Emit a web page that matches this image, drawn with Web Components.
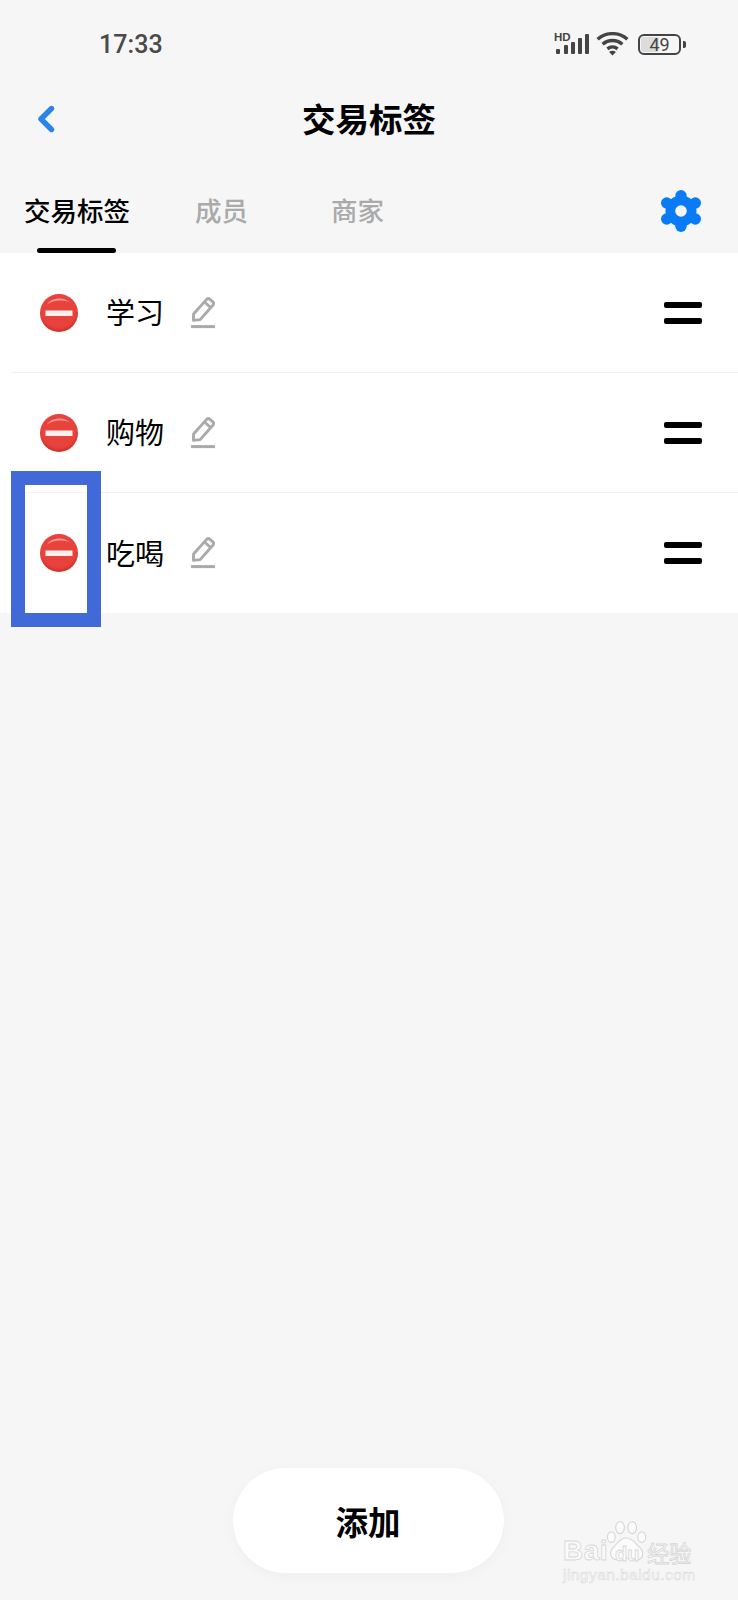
<!DOCTYPE html>
<html lang="zh">
<head>
<meta charset="utf-8">
<title>交易标签</title>
<style>
  html, body { margin: 0; padding: 0; }
  body {
    width: 738px;
    height: 1600px;
    overflow: hidden;
    background: #f6f6f6;
    font-family: Roboto, "Noto Sans CJK SC", sans-serif;
  }
</style>
</head>
<body>
<tag-screen>
  <status-bar slot="top" time="17:33" battery="49"></status-bar>
  <nav-header slot="top" title="交易标签"></nav-header>
  <tab-strip slot="top" data-tabs='["交易标签","成员","商家"]'></tab-strip>
  <tag-row name="学习"></tag-row>
  <tag-row name="购物"></tag-row>
  <tag-row name="吃喝" last></tag-row>
  <add-button slot="bottom">添加</add-button>
</tag-screen>
<mark-box></mark-box>
<baidu-mark></baidu-mark>

<script>
const CJK = '"Noto Sans CJK SC", sans-serif';

class TagScreen extends HTMLElement {
  constructor() {
    super();
    this.attachShadow({ mode: 'open' });
  }

  connectedCallback() {
    this.shadowRoot.innerHTML = `
      <style>
        :host { display: flex; flex-direction: column; height: 1600px; }
        .list { display: block; background: #fff; }
        .rest { flex: 1; }
        .bottom { display: flex; justify-content: center; padding: 0 2px 27px 0; }
      </style>
      <slot name="top"></slot>
      <div class="list"><slot></slot></div>
      <div class="rest"></div>
      <div class="bottom"><slot name="bottom"></slot></div>
    `;
  }
}

class StatusBar extends HTMLElement {
  constructor() {
    super();
    this.attachShadow({ mode: 'open' });
  }

  connectedCallback() {
    const time = this.getAttribute('time');
    const battery = this.getAttribute('battery');
    this.shadowRoot.innerHTML = `
      <style>
        :host { display: flex; align-items: center; height: 88px; padding: 0 52px 0 99px; color: #444; }
        .time { padding-top: 2px; font: 500 25px/30px Roboto, sans-serif; letter-spacing: 0.1px; color: #4a4a4a; }
        .icons { margin-left: auto; display: flex; align-items: center; }
        svg { display: block; }
        .wifi { margin-left: 6px; }
        .battery { margin-left: 9px; }
        .hd { font: 700 11.5px "Liberation Sans", sans-serif; fill: #444; }
        .cell {
          position: relative; box-sizing: border-box; width: 43px; height: 21px;
          border: 2px solid #444; border-radius: 6px; overflow: hidden;
          font: 400 18px/17px Roboto, sans-serif; text-align: center;
        }
        .cell span { position: relative; }
        .fill { position: absolute; left: 1px; top: 1px; bottom: 1px; width: 18px; background: #dcdcdc; border-radius: 2px; }
        .nub { width: 3px; height: 7px; margin-left: 2px; background: #444; border-radius: 0 2px 2px 0; }
      </style>
      <div class="time">${time}</div>
      <div class="icons">
        <svg width="36" height="24" viewBox="0 0 36 24">
          <text class="hd" x="0" y="9">HD</text>
          <rect x="2" y="17" width="4" height="5" rx="1" fill="#444"/>
          <rect x="10" y="13" width="4" height="9" rx="1" fill="#444"/>
          <rect x="17" y="10" width="4" height="12" rx="1" fill="#444"/>
          <rect x="24" y="6" width="4" height="16" rx="1" fill="#444"/>
          <rect x="31" y="2" width="4" height="20" rx="1" fill="#444"/>
        </svg>
        <svg class="wifi" width="33" height="24" viewBox="0 0 33 24" fill="none" stroke="#444" stroke-width="3.4">
          <path d="M1.6 7.2C10 -0.2 23 -0.2 31.4 7.2"/>
          <path d="M6.6 12.2C12.4 7.2 20.6 7.2 26.4 12.2"/>
          <path d="M11.4 16.8C14.4 14.4 18.6 14.4 21.6 16.8"/>
          <path d="M16.5 23.5l-3.4-3.4a4.8 4.8 0 0 1 6.8 0z" fill="#444" stroke="none"/>
        </svg>
        <div class="battery cell"><div class="fill"></div><span>${battery}</span></div>
        <div class="nub"></div>
      </div>
    `;
  }
}

class NavHeader extends HTMLElement {
  constructor() {
    super();
    this.attachShadow({ mode: 'open' });
  }

  connectedCallback() {
    this.shadowRoot.innerHTML = `
      <style>
        :host { display: grid; grid-template-columns: 1fr auto 1fr; align-items: center; height: 64px; }
        svg { display: block; margin: 0 0 2px 36px; }
        .title { margin-bottom: 4px; font: 700 33.5px/44px ${CJK}; color: #000; }
      </style>
      <svg width="20" height="28" viewBox="0 0 20 28" fill="none">
        <path d="M15.5 3.5L5 14l10.5 10.5" stroke="#2a85ea" stroke-width="5.4" stroke-linecap="round" stroke-linejoin="round"/>
      </svg>
      <div class="title">${this.getAttribute('title')}</div>
      <div></div>
    `;
  }
}

class TabStrip extends HTMLElement {
  constructor() {
    super();
    this.attachShadow({ mode: 'open' });
  }

  connectedCallback() {
    const tabs = JSON.parse(this.getAttribute('data-tabs')) || [];
    this.shadowRoot.innerHTML = `
      <style>
        :host { display: flex; height: 101px; padding: 0 36px 0 24px; }
        .tab {
          display: flex; flex-direction: column; align-items: center;
          padding-top: 39px; margin-right: 65px;
          font: 500 26.5px/38px ${CJK}; color: #aaa;
        }
        .tab + .tab { margin-right: 83px; }
        .tab.on { color: #000; }
        .bar { width: 0; height: 5px; margin-top: 19px; border-radius: 3px; }
        .on .bar { width: 79px; margin-left: -1px; background: #000; }
        svg { display: block; margin: 38px 0 0 auto; }
      </style>
      ${tabs
        .map(
          (tab, i) => `
          <div class="tab ${i === 0 ? 'on' : ''}">
            <span>${tab}</span>
            <div class="bar"></div>
          </div>
        `
        )
        .join('')}
      <svg width="42" height="42" viewBox="0 0 42 42">
        <g fill="#0a7bf5">
          <circle cx="21" cy="21" r="15.5"/>
          <circle cx="21" cy="5.8" r="5.7"/>
          <circle cx="21" cy="36.2" r="5.7"/>
          <circle cx="6.7" cy="13" r="5.7"/>
          <circle cx="35.3" cy="13" r="5.7"/>
          <circle cx="6.7" cy="29" r="5.7"/>
          <circle cx="35.3" cy="29" r="5.7"/>
        </g>
        <circle cx="21" cy="21" r="5.8" fill="#f6f6f6"/>
      </svg>
    `;
  }
}

class TagRow extends HTMLElement {
  constructor() {
    super();
    this.attachShadow({ mode: 'open' });
  }

  connectedCallback() {
    const id = 'g' + this.getAttribute('name').charCodeAt(0);
    this.shadowRoot.innerHTML = `
      <style>
        :host { display: block; height: 120px; }
        .row {
          box-sizing: border-box; display: flex; align-items: center; height: 120px;
          margin-left: 11px; padding: 0 36px 0 28px;
          border-bottom: 1px solid #f3f3f3;
        }
        :host([last]) .row { border-bottom: 0; }
        svg { display: block; flex: none; }
        .name { margin: 0 27px 3px 27px; font: 400 29px/40px ${CJK}; color: #000; }
        .handle { margin-left: auto; }
      </style>
      <div class="row">
        <svg width="40" height="40" viewBox="0 0 40 40">
          <defs>
            <radialGradient id="${id}" cx="50%" cy="42%" r="58%">
              <stop offset="0.78" stop-color="#e8423c"/>
              <stop offset="1" stop-color="#c9302c"/>
            </radialGradient>
          </defs>
          <circle cx="20" cy="20" r="19" fill="url(#${id})"/>
          <path d="M8 11.5C12 5 24 3 31 9.5C24 6.5 14 7 8 11.5z" fill="#f49a94"/>
          <rect x="6.5" y="17.5" width="27" height="5.5" fill="#fdf0ee"/>
        </svg>
        <div class="name">${this.getAttribute('name')}</div>
        <svg width="24" height="32" viewBox="0 0 24 32" fill="none" stroke="#aaa">
          <path d="M2.4 23.4L2.6 17L15.4 2.6a2.6 2.6 0 0 1 3.6-.2l2.6 2.2a2.6 2.6 0 0 1 .2 3.6L9.2 22.6z" stroke-width="2.9" stroke-linejoin="round"/>
          <path d="M13.4 5l6.4 5.6" stroke-width="2.9"/>
          <path d="M0 29.6h24" stroke-width="3"/>
        </svg>
        <svg class="handle" width="38" height="22" viewBox="0 0 38 22" fill="#000">
          <rect x="0" y="0" width="38" height="6" rx="2"/>
          <rect x="0" y="16" width="38" height="6" rx="2"/>
        </svg>
      </div>
    `;
  }
}

class AddButton extends HTMLElement {
  constructor() {
    super();
    this.attachShadow({ mode: 'open' });
  }

  connectedCallback() {
    this.shadowRoot.innerHTML = `
      <style>
        :host {
          display: flex; align-items: center; justify-content: center;
          width: 271px; height: 105px; border-radius: 53px; background: #fff;
          box-shadow: 0 3px 14px rgba(0, 0, 0, 0.035);
          font: 700 32.5px/44px ${CJK}; color: #000;
        }
      </style>
      <slot></slot>
    `;
  }
}

// the blue annotation frame drawn over the third row
class MarkBox extends HTMLElement {
  constructor() {
    super();
    this.attachShadow({ mode: 'open' });
  }

  connectedCallback() {
    this.shadowRoot.innerHTML = `
      <style>
        :host {
          position: absolute; left: 11px; top: 471px; box-sizing: border-box;
          width: 90px; height: 156px; border: 14px solid #4169d8;
        }
      </style>
    `;
  }
}

class BaiduMark extends HTMLElement {
  constructor() {
    super();
    this.attachShadow({ mode: 'open' });
  }

  connectedCallback() {
    this.shadowRoot.innerHTML = `
      <style>
        :host { position: absolute; left: 563px; top: 1518px; width: 134px; height: 68px; color: #fbfbfb; }
        div { position: absolute; white-space: nowrap; -webkit-text-stroke: 0.8px #d6d6d6; }
        .bai { left: 0; top: 17px; font: 700 28px/32px "Liberation Sans", sans-serif; letter-spacing: 0.5px; }
        .du { left: 52px; top: 25px; font: 700 20px/22px "Liberation Sans", sans-serif; }
        .jy { left: 84px; top: 19px; font: 400 22.5px/30px ${CJK}; letter-spacing: -0.4px; }
        .url { left: 0; top: 47px; font: 400 15.5px/20px "Liberation Sans", sans-serif; letter-spacing: 0.45px; -webkit-text-stroke-width: 0.5px; }
        svg { position: absolute; left: 44px; top: 2px; }
      </style>
      <svg width="40" height="43" viewBox="0 0 46 48" fill="#fbfbfb" stroke="#d6d6d6" stroke-width="1.3">
        <ellipse cx="15" cy="8" rx="5" ry="7"/>
        <ellipse cx="29" cy="8" rx="5" ry="7"/>
        <ellipse cx="5" cy="19" rx="4.5" ry="6"/>
        <ellipse cx="40" cy="19" rx="4.5" ry="6"/>
        <path d="M22 20C14 20 12 27 7 31C2 36 4 45 12 45C17 45 19 43 23 43C27 43 29 45 34 45C42 45 43 36 38 31C33 27 30 20 22 20z"/>
      </svg>
      <div class="bai">Bai</div>
      <div class="du">du</div>
      <div class="jy">经验</div>
      <div class="url">jingyan.baidu.com</div>
    `;
  }
}

customElements.define('tag-screen', TagScreen);
customElements.define('status-bar', StatusBar);
customElements.define('nav-header', NavHeader);
customElements.define('tab-strip', TabStrip);
customElements.define('tag-row', TagRow);
customElements.define('add-button', AddButton);
customElements.define('mark-box', MarkBox);
customElements.define('baidu-mark', BaiduMark);
</script>
</body>
</html>
